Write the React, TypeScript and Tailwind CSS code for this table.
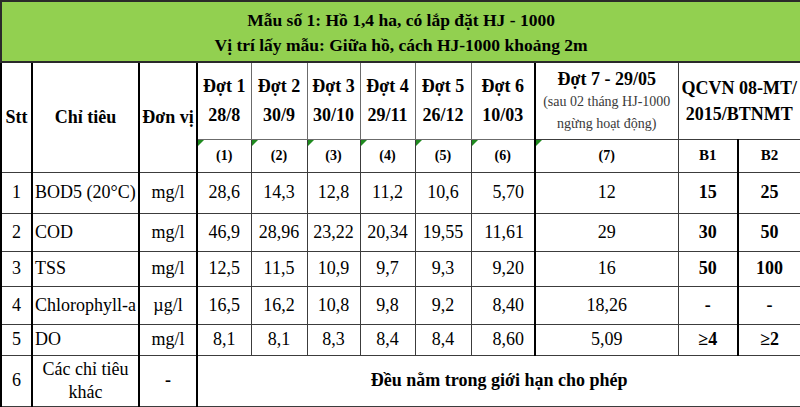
import React from "react";

const rows = [
  { stt: "1", name: "BOD5 (20°C)", unit: "mg/l", vals: ["28,6", "14,3", "12,8", "11,2", "10,6", "5,70"], d7: "12", b1: "15", b2: "25" },
  { stt: "2", name: "COD", unit: "mg/l", vals: ["46,9", "28,96", "23,22", "20,34", "19,55", "11,61"], d7: "29", b1: "30", b2: "50" },
  { stt: "3", name: "TSS", unit: "mg/l", vals: ["12,5", "11,5", "10,9", "9,7", "9,3", "9,20"], d7: "16", b1: "50", b2: "100" },
  { stt: "4", name: "Chlorophyll-a", unit: "µg/l", vals: ["16,5", "16,2", "10,8", "9,8", "9,2", "8,40"], d7: "18,26", b1: "-", b2: "-" },
  { stt: "5", name: "DO", unit: "mg/l", vals: ["8,1", "8,1", "8,3", "8,4", "8,4", "8,60"], d7: "5,09", b1: "≥4", b2: "≥2" },
];

const rowHeights = ["h-[41px]", "h-[38px]", "h-[35px]", "h-[38px]", "h-[31px]"];

const dot = [
  { t: "Đợt 1", d: "28/8" },
  { t: "Đợt 2", d: "30/9" },
  { t: "Đợt 3", d: "30/10" },
  { t: "Đợt 4", d: "29/11" },
  { t: "Đợt 5", d: "26/12" },
  { t: "Đợt 6", d: "10/03" },
];

function Flag() {
  return <span className="absolute left-0 top-0 w-0 h-0 border-t-[6px] border-t-[#1f8a1f] border-r-[6px] border-r-transparent" />;
}

export default function App() {
  const cell = "border border-[#3c3c3c] p-0 text-center align-middle";
  return (
    <div className="w-[800px] h-[407px] bg-white overflow-hidden font-['Liberation_Serif','Times_New_Roman',serif]">
      <table className="w-[800px] border-collapse table-fixed text-black font-['Liberation_Serif','Times_New_Roman',serif]">
        <colgroup>
          <col className="w-[31px]" />
          <col className="w-[107px]" />
          <col className="w-[58px]" />
          <col className="w-[54px]" />
          <col className="w-[56px]" />
          <col className="w-[53px]" />
          <col className="w-[55px]" />
          <col className="w-[56px]" />
          <col className="w-[64px]" />
          <col className="w-[143px]" />
          <col className="w-[60px]" />
          <col className="w-[63px]" />
        </colgroup>
        <tbody>
          <tr className="h-[61px]">
            <td colSpan={12} className="border-2 border-[#2a2a2a] bg-[#92d050] text-center font-bold text-[17.5px] leading-[25px] pt-[2px]">
              Mẫu số 1: Hồ 1,4 ha, có lắp đặt HJ - 1000
              <br />
              Vị trí lấy mẫu: Giữa hồ, cách HJ-1000 khoảng 2m
            </td>
          </tr>
          <tr className="h-[77px] font-bold text-[18px] leading-[25px]">
            <td rowSpan={2} className={`${cell} border-l-2 border-l-black border-r-2 border-r-black`}>Stt</td>
            <td rowSpan={2} className={`${cell} border-r-2 border-r-black`}>Chỉ tiêu</td>
            <td rowSpan={2} className={`${cell} border-r-2 border-r-black`}>Đơn vị</td>
            {dot.map((d) => (
              <td key={d.t} className={`${cell} border-[#6b6b6b] leading-[29px]`}>
                {d.t}
                <br />
                {d.d}
              </td>
            ))}
            <td className={`${cell} border-l-2 border-l-black`}>
              <div className="leading-[24px]">Đợt 7 - 29/05</div>
              <div className="font-normal text-[14px] leading-[22px] text-[#3a3a3a]">
                (sau 02 tháng HJ-1000
                <br />
                ngừng hoạt động)
              </div>
            </td>
            <td colSpan={2} className={`${cell} border-r-2 border-r-[#2a2a2a] leading-[26px]`}>
              QCVN 08-MT/
              <br />
              2015/BTNMT
            </td>
          </tr>
          <tr className="h-[33px] font-bold text-[14px]">
            {["(1)", "(2)", "(3)", "(4)", "(5)", "(6)"].map((s) => (
              <td key={s} className={`${cell} relative`}>
                <Flag />
                {s}
              </td>
            ))}
            <td className={`${cell} relative border-l-2 border-l-black`}>
              <Flag />
              (7)
            </td>
            <td className={`${cell} text-[15px] border-r-2 border-r-black`}>B1</td>
            <td className={`${cell} text-[15px] border-r-2 border-r-[#2a2a2a]`}>B2</td>
          </tr>
          {rows.map((r, i) => (
            <tr key={r.stt} className={`${rowHeights[i]} text-[18px]`}>
              <td className={`${cell} border-l-2 border-l-black border-r-2 border-r-black`}>{r.stt}</td>
              <td className={`${cell} text-left pl-[2px] border-r-2 border-r-black whitespace-nowrap`}>{r.name}</td>
              <td className={`${cell} border-r-2 border-r-black`}>{r.unit}</td>
              {r.vals.map((v, j) => (
                <td key={j} className={`${cell} ${j === 5 ? "text-right pr-[10px]" : ""}`}>
                  {v}
                </td>
              ))}
              <td className={`${cell} border-l-2 border-l-black`}>{r.d7}</td>
              <td className={`${cell} font-bold border-r-2 border-r-black`}>{r.b1}</td>
              <td className={`${cell} font-bold border-r-2 border-r-[#2a2a2a]`}>{r.b2}</td>
            </tr>
          ))}
          <tr className="h-[51px] text-[18px]">
            <td className={`${cell} border-l-2 border-l-black border-r-2 border-r-black`}>6</td>
            <td className={`${cell} leading-[23px] border-r-2 border-r-black`}>
              Các chỉ tiêu
              <br />
              khác
            </td>
            <td className={`${cell} font-bold border-r-2 border-r-black`}>-</td>
            <td colSpan={9} className={`${cell} font-bold border-r-2 border-r-[#2a2a2a]`}>
              Đều nằm trong giới hạn cho phép
            </td>
          </tr>
        </tbody>
      </table>
    </div>
  );
}
